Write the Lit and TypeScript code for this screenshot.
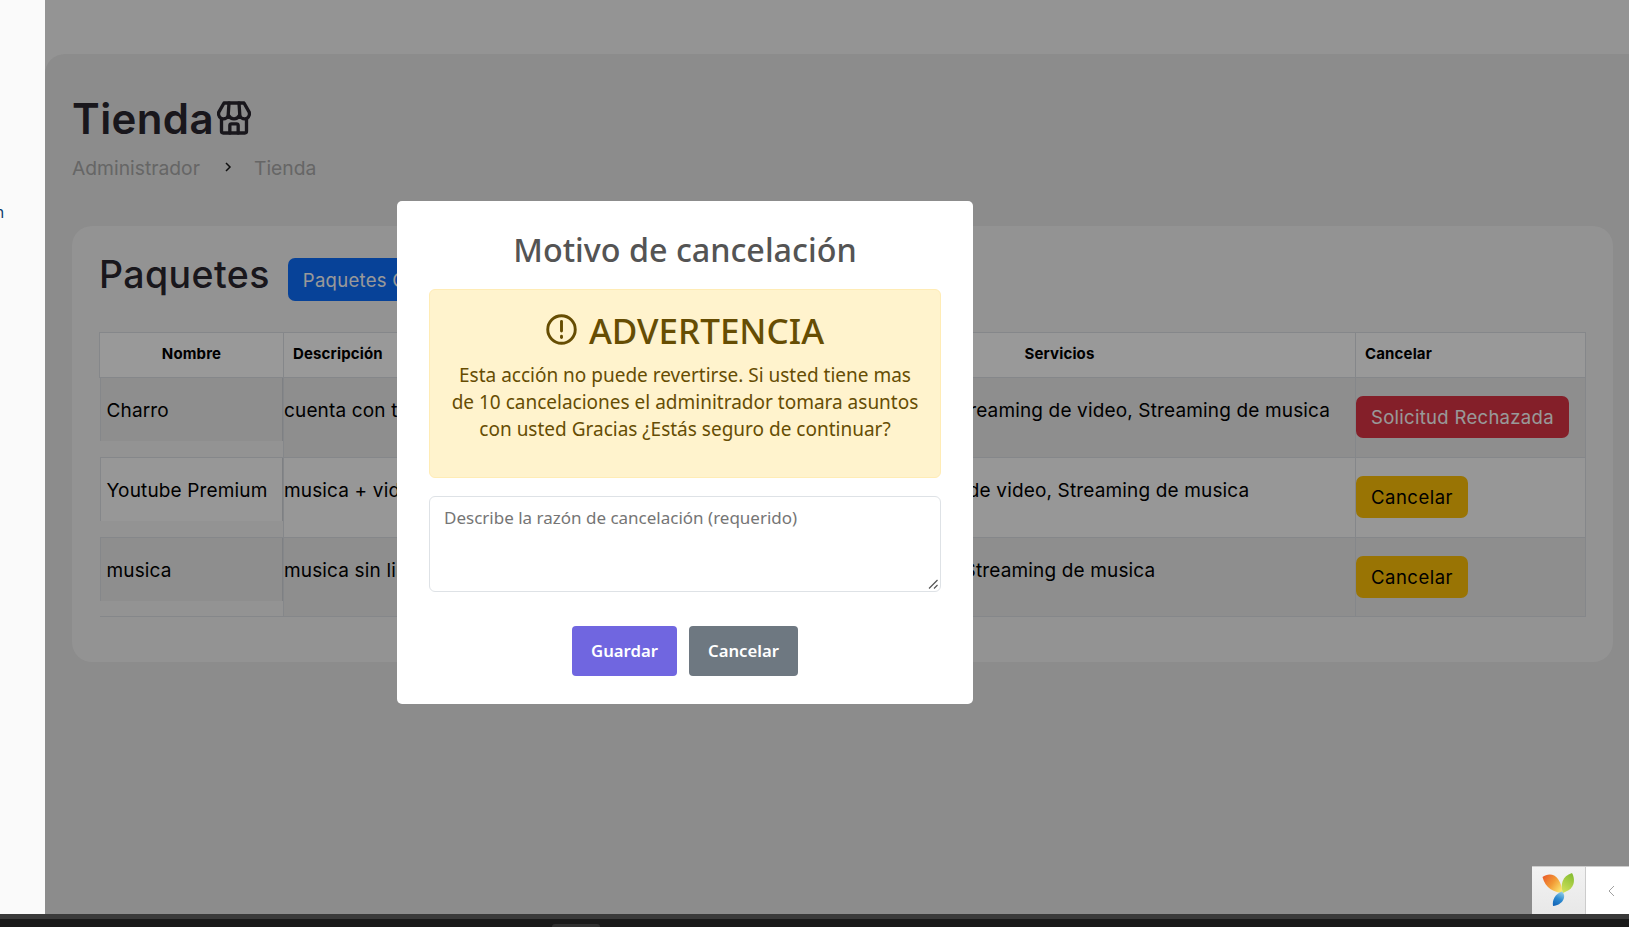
import { LitElement, html, css, svg } from 'lit';
import { customElement } from 'lit/decorators.js';

interface Paquete {
  nombre: string;
  descripcion: string;
  servicios: string;
  rechazada?: boolean;
}

const paquetes: Paquete[] = [
  {
    nombre: 'Charro',
    descripcion: 'cuenta con todo',
    servicios: 'Streaming de TV, Streaming de video, Streaming de musica',
    rechazada: true
  },
  {
    nombre: 'Youtube Premium',
    descripcion: 'musica + video',
    servicios: 'Streaming de video, Streaming de musica'
  },
  {
    nombre: 'musica',
    descripcion: 'musica sin limites',
    servicios: 'Streaming de musica'
  }
];

const storeIcon = svg`
  <path d="M6 3h12l3.2 5.6c.5 2.2-1 3.9-2.9 3.9-1.4 0-2.4-.8-3.1-2-.6 1.2-1.7 2-3.2 2s-2.600-.8-3.200-2c-.7 1.200-1.700 2-3.100 2-1.900 0-3.400-1.700-2.900-3.900z" />
  <path d="M9 3 8.500 10.500M15 3l.5 7.500" />
  <path d="M4.500 12.500V20a1 1 0 0 0 1 1h13a1 1 0 0 0 1-1v-7.500" />
  <path d="M9.500 21v-4.500a1 1 0 0 1 1-1h3a1 1 0 0 1 1 1V21" />
`;

const yiiLogo = svg`
  <defs>
    <linearGradient id="yo" x1="0" y1="0" x2="1" y2="0.7">
      <stop offset="0" stop-color="#e8552a" />
      <stop offset="0.55" stop-color="#f29a35" />
      <stop offset="1" stop-color="#fbe46e" />
    </linearGradient>
    <linearGradient id="yg" x1="0.7" y1="0" x2="0.3" y2="1">
      <stop offset="0" stop-color="#86bd32" />
      <stop offset="1" stop-color="#cfe05a" />
    </linearGradient>
    <linearGradient id="yb" x1="0.7" y1="0" x2="0.3" y2="1">
      <stop offset="0" stop-color="#8fcbe6" />
      <stop offset="0.5" stop-color="#2d8ad0" />
      <stop offset="1" stop-color="#1566b8" />
    </linearGradient>
  </defs>
  <path fill="url(#yo)" d="M.5 4C5 .5 12 0 16 6c3 4 4 9 5 14C13 20 3 15 .5 4Z" />
  <path fill="url(#yg)" d="M30 0c3 5 3 13-3 17l-6 3c-3-8-1-17 9-20Z" />
  <path fill="url(#yb)" d="M20 18.500c5 4.500 1 13.500-9 14.500-1-6 2-12 9-14.500Z" />
`;

@customElement('app-root')
export class AppRoot extends LitElement {
  static styles = css`
    :host {
      display: block;
      height: 927px;
      overflow: hidden;
      font-family: Inter, 'Liberation Sans', sans-serif;
      color: #000;
    }
    .screen {
      display: flex;
      flex-direction: column;
      height: 100%;
    }
    .desktop {
      position: relative;
      display: flex;
      height: 914px;
      background: #f7f7f7;
      overflow: hidden;
    }
    .sidebar {
      position: relative;
      z-index: 3;
      flex: 0 0 45px;
      background: #fafafa;
      padding-top: 205px;
    }
    .nav-link {
      display: flex;
      justify-content: flex-end;
      width: 4px;
      overflow: hidden;
      white-space: nowrap;
      font-size: 15px;
      line-height: 16px;
      color: #0a3a6a;
    }
    .main {
      flex: 1;
      padding-top: 54px;
    }
    .panel {
      height: 100%;
      padding: 40px 28px 0 27px;
      background: #e9e9e9;
      border-radius: 20px 0 0 0;
    }
    .page-title {
      display: flex;
      align-items: center;
      gap: 0;
      margin: 0;
      font-size: 42px;
      line-height: 50px;
      font-weight: 600;
      letter-spacing: 0.4px;
      color: #2b2730;
    }
    .page-title svg {
      width: 40px;
      height: 40px;
      margin-top: -2px;
      fill: none;
      stroke: currentColor;
      stroke-width: 2;
      stroke-linejoin: round;
      stroke-linecap: round;
    }
    .crumbs {
      display: flex;
      align-items: center;
      margin-top: 10px;
      font-size: 19.300px;
      line-height: 28px;
      color: #aaa;
    }
    .crumbs svg {
      width: 8px;
      height: 10px;
      margin: -2px 22px 0 24px;
      fill: none;
      stroke: #1c1c1c;
      stroke-width: 1.500;
    }
    .card {
      width: 1541px;
      height: 436px;
      margin-top: 44px;
      padding: 24px 27px;
      box-sizing: border-box;
      background: #f5f5f5;
      border-radius: 20px;
    }
    .card-head {
      display: flex;
      align-items: flex-start;
      gap: 18px;
    }
    .card-head h2 {
      margin: 1px 0 0;
      font-size: 37.500px;
      line-height: 48px;
      font-weight: 500;
      letter-spacing: 0.4px;
      color: #2b2730;
    }
    .btn {
      display: inline-block;
      border-radius: 7px;
      font-size: 18.500px;
      line-height: 28px;
      padding: 7px 15px;
      letter-spacing: 0.3px;
      white-space: nowrap;
    }
    .btn-primary {
      margin-top: 8px;
      background: #0d6efd;
      color: #fff;
      padding: 7.500px 15px;
    }
    .btn-danger {
      background: #dc3545;
      color: #fff;
    }
    .btn-warning {
      background: #ffc107;
      color: #000;
      padding: 7px 15px;
      letter-spacing: 0.5px;
    }
    table {
      width: 1486px;
      margin-top: 31px;
      border-collapse: collapse;
      table-layout: fixed;
      font-size: 19px;
      letter-spacing: 0.15px;
    }
    th,
    td {
      border: 1px solid #dee2e6;
      padding: 0;
      vertical-align: top;
    }
    th {
      height: 41px;
      background: #fff;
      font-size: 15px;
      font-weight: 700;
      line-height: 20px;
      vertical-align: middle;
      padding: 0 9px 3px;
    }
    .left {
      text-align: left;
    }
    tbody td {
      height: 79px;
    }
    tbody tr:last-child td {
      height: 78px;
    }
    tr.odd td:not(.name) {
      background: #ededed;
    }
    tr.even td:not(.name) {
      background: #fcfcfc;
    }
    td.name {
      border-top: 0;
      border-left: 0;
    }
    .name-box {
      height: 63px;
      padding: 21px 0 0 6px;
      box-sizing: border-box;
      line-height: 23px;
      border-left: 1px solid #dee2e6;
      border-right: 1px solid #d2d6da;
      white-space: nowrap;
    }
    tr.odd .name-box {
      background: #ededed;
    }
    tr.even .name-box {
      background: #fcfcfc;
    }
    .text {
      padding: 21px 0 0;
      line-height: 23px;
      white-space: nowrap;
    }
    .center {
      text-align: center;
    }
    .action {
      padding-top: 18px;
    }
    .overlay {
      position: absolute;
      inset: 0;
      z-index: 2;
      padding: 201px 0 0 397px;
      background: rgba(0, 0, 0, 0.4);
    }
    .modal {
      display: flex;
      flex-direction: column;
      width: 576px;
      height: 503px;
      box-sizing: border-box;
      padding: 0 32px;
      background: #fff;
      border-radius: 5px;
      font-family: 'Noto Sans', 'Open Sans', sans-serif;
    }
    .modal h3 {
      margin: 27px 0 0;
      text-align: center;
      font-size: 32.300px;
      line-height: 42px;
      font-weight: 500;
      color: #545454;
    }
    .alert {
      height: 189px;
      box-sizing: border-box;
      margin-top: 19px;
      padding: 18px 16px 0;
      text-align: center;
      background: #fff3cd;
      border: 1px solid #ffecb5;
      border-radius: 6px;
      color: #664d03;
    }
    .alert-title {
      display: flex;
      justify-content: center;
      align-items: center;
      gap: 12px;
      font-size: 35px;
      line-height: 46px;
      font-weight: 500;
    }
    .alert-title svg {
      width: 31px;
      height: 31px;
      margin-top: -4px;
      fill: none;
      stroke: currentColor;
      stroke-width: 1.500;
      stroke-linecap: round;
    }
    .alert p {
      margin: 8px 0 0;
      font-size: 19px;
      line-height: 27px;
    }
    .reason {
      position: relative;
      margin-top: 18px;
    }
    textarea {
      display: block;
      width: 100%;
      height: 96px;
      padding: 7px 14px;
      box-sizing: border-box;
      border: 1px solid #dee2e6;
      border-radius: 6px;
      font: 17px/27px 'Noto Sans', 'Open Sans', sans-serif;
      outline: none;
      background: #fff;
      resize: none;
    }
    textarea::placeholder {
      color: #757575;
      opacity: 1;
    }
    .grip {
      position: absolute;
      right: 3px;
      bottom: 3px;
      width: 10px;
      height: 10px;
      fill: none;
      stroke: #555;
      stroke-width: 1.200;
    }
    .modal-actions {
      display: flex;
      justify-content: center;
      gap: 12px;
      margin-top: 34px;
    }
    .modal-btn {
      display: flex;
      align-items: center;
      justify-content: center;
      height: 50px;
      padding-bottom: 2px;
      box-sizing: border-box;
      border-radius: 4px;
      color: #fff;
      font-size: 16.700px;
      font-weight: 600;
    }
    .save {
      width: 105px;
      background: #7066e0;
    }
    .dismiss {
      width: 109px;
      background: #6e7881;
    }
    .debugbar {
      position: absolute;
      z-index: 3;
      right: 0;
      bottom: 0;
      display: flex;
      width: 97px;
      height: 48px;
      background: #fff;
      border-top: 1px solid #ccc;
      box-sizing: border-box;
    }
    .debug-logo {
      display: flex;
      align-items: center;
      justify-content: center;
      width: 54px;
      padding-bottom: 2px;
      background: linear-gradient(#f2f2f2, #e8e8e8);
      border-right: 1px solid #ccc;
      box-sizing: border-box;
    }
    .debug-logo svg {
      width: 33px;
      height: 34px;
    }
    .debug-toggle {
      flex: 1;
      display: flex;
      align-items: center;
      justify-content: center;
      padding-left: 8px;
    }
    .debug-toggle svg {
      width: 7px;
      height: 12px;
      fill: none;
      stroke: #a0a0a0;
      stroke-width: 1;
    }
    .taskbar {
      position: relative;
      flex: 1;
      background: #1a1a1a;
      border-top: 5px solid #3a3a3a;
    }
    .task-tab {
      position: absolute;
      left: 552px;
      bottom: 0;
      width: 48px;
      height: 3px;
      background: #303030;
      border-radius: 3px 3px 0 0;
    }
  `;

  private renderRow(p: Paquete, i: number) {
    return html`
      <tr class="${i % 2 === 0 ? 'odd' : 'even'}">
        <td class="name"><div class="name-box">${p.nombre}</div></td>
        <td><div class="text">${p.descripcion}</div></td>
        <td><div class="text center">${p.servicios}</div></td>
        <td>
          <div class="action">
            ${p.rechazada
              ? html`<span class="btn btn-danger">Solicitud Rechazada</span>`
              : html`<span class="btn btn-warning">Cancelar</span>`}
          </div>
        </td>
      </tr>
    `;
  }

  render() {
    return html`
      <div class="screen">
        <div class="desktop">
          <aside class="sidebar">
            <div class="nav-link"><span>Administracion</span></div>
          </aside>
          <main class="main">
            <div class="panel">
              <h1 class="page-title">Tienda<svg viewBox="0 0 24 24">${storeIcon}</svg></h1>
              <div class="crumbs">
                <span>Administrador</span>
                <svg viewBox="0 0 8 10"><path d="M2 1l4 4-4 4" /></svg>
                <span>Tienda</span>
              </div>
              <section class="card">
                <div class="card-head">
                  <h2>Paquetes</h2>
                  <span class="btn btn-primary">Paquetes Comprados</span>
                </div>
                <table>
                  <colgroup>
                    <col style="width:184px" />
                    <col style="width:480px" />
                    <col style="width:592px" />
                    <col style="width:230px" />
                  </colgroup>
                  <thead>
                    <tr>
                      <th>Nombre</th>
                      <th class="left">Descripción</th>
                      <th>Servicios</th>
                      <th class="left">Cancelar</th>
                    </tr>
                  </thead>
                  <tbody>
                    ${paquetes.map((p, i) => this.renderRow(p, i))}
                  </tbody>
                </table>
              </section>
            </div>
          </main>
          <div class="overlay">
            <div class="modal">
              <h3>Motivo de cancelación</h3>
              <div class="alert">
                <div class="alert-title">
                  <svg viewBox="0 0 16 16">
                    <circle cx="8" cy="8" r="7.100" />
                    <path d="M8 3.800v5" />
                    <path d="M8 11.500v.6" />
                  </svg>
                  <span>ADVERTENCIA</span>
                </div>
                <p>
                  Esta acción no puede revertirse. Si usted tiene mas de 10 cancelaciones el
                  adminitrador tomara asuntos con usted Gracias ¿Estás seguro de continuar?
                </p>
              </div>
              <div class="reason">
                <textarea placeholder="Describe la razón de cancelación (requerido)"></textarea>
                <svg class="grip" viewBox="0 0 10 10"><path d="M1 9.500 9.500 1M6 9.500 9.500 6" /></svg>
              </div>
              <div class="modal-actions">
                <div class="modal-btn save">Guardar</div>
                <div class="modal-btn dismiss">Cancelar</div>
              </div>
            </div>
          </div>
          <div class="debugbar">
            <div class="debug-logo"><svg viewBox="0 0 33 34">${yiiLogo}</svg></div>
            <div class="debug-toggle"><svg viewBox="0 0 7 12"><path d="M6 1 1 6l5 5" /></svg></div>
          </div>
        </div>
        <div class="taskbar"><div class="task-tab"></div></div>
      </div>
    `;
  }
}

declare global {
  interface HTMLElementTagNameMap {
    'app-root': AppRoot;
  }
}
